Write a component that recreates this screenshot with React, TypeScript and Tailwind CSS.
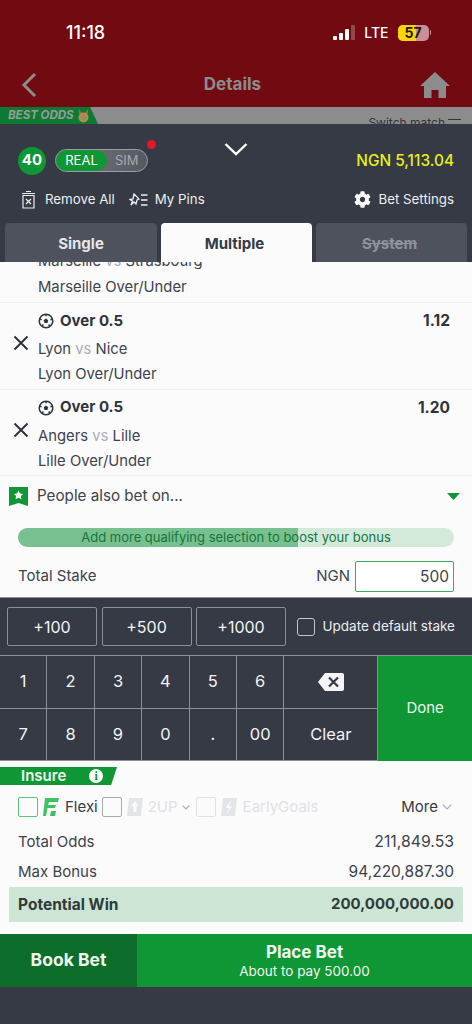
import { FaCog } from 'react-icons/fa';

const selections = [
    { odds: '1.12', home: 'Lyon', away: 'Nice', market: 'Lyon Over/Under' },
    { odds: '1.20', home: 'Angers', away: 'Lille', market: 'Lille Over/Under' },
];

function Ball() {
    return (
        <svg width="16" height="16" viewBox="0 0 16 16" fill="none" className="shrink-0">
            <circle cx="8" cy="8" r="6.8" stroke="#2f333c" strokeWidth="1.5" />
            <path d="M8 5.6l2.3 1.7-.9 2.7H6.6l-.9-2.7z" fill="#2f333c" />
            <path d="M8 1.5v1.8M2 6.3l1.6.5M14 6.3l-1.6.5M4.2 13l1.1-1.5M11.8 13l-1.1-1.5" stroke="#2f333c" strokeWidth="1.5" />
        </svg>
    );
}

function Cross() {
    return (
        <svg width="18" height="18" viewBox="0 0 18 18" fill="none" className="shrink-0">
            <path d="M2.5 2.5l13 13M15.5 2.5l-13 13" stroke="#2b2f38" strokeWidth="1.9" />
        </svg>
    );
}

function Selection({ odds, home, away, market }: { odds: string; home: string; away: string; market: string }) {
    return (
        <div className="flex h-[86.5px] shrink-0 border-b border-[#eef0f2] pl-[12px] pr-[22px]">
            <div className="flex w-[26px] items-center pb-[5px]">
                <Cross />
            </div>
            <div className="min-w-0 flex-1 pt-[8px] text-[14.8px] text-[#3d424c]">
                <div className="flex h-[20px] items-center justify-between">
                    <div className="flex items-center gap-[6px] text-[#2f333c]">
                        <Ball />
                        <span className="text-[15px] font-bold">Over 0.5</span>
                    </div>
                    <span className="text-[15.5px] font-bold text-[#2f333c]">{odds}</span>
                </div>
                <div className="mt-[8px] h-[20px] leading-[20px]">
                    {home} <span className="text-[#a9adb5]">vs</span> {away}
                </div>
                <div className="mt-[5px] h-[20px] leading-[20px]">{market}</div>
            </div>
        </div>
    );
}

function Key({ label, className = '' }: { label: React.ReactNode; className?: string }) {
    return (
        <div className={`flex items-center justify-center border-b border-r border-[#8b8f98] text-[16.5px] text-[#f2f3f5] ${className}`}>
            {label}
        </div>
    );
}

export default function App() {
    return (
        <div className="flex h-[1024px] w-[472px] flex-col overflow-hidden bg-[#353a45] font-['Inter',sans-serif]">
            {/* status bar and dimmed page header */}
            <div className="h-[107px] shrink-0 bg-[#720b11]">
                <div className="flex h-[64px] items-center pl-[66px] pr-[41px] pt-[1px]">
                    <span className="text-[18px] font-medium text-white">11:18</span>
                    <div className="ml-auto flex items-center">
                        <div className="flex items-end gap-[2px]">
                            <span className="h-[4px] w-[4px] rounded-[1px] bg-white" />
                            <span className="h-[7px] w-[4px] rounded-[1px] bg-white" />
                            <span className="h-[11px] w-[4px] rounded-[1px] bg-white" />
                            <span className="h-[15px] w-[4px] rounded-[1px] bg-white/25" />
                        </div>
                        <span className="ml-[9px] text-[14px] font-medium text-white">LTE</span>
                        <div className="relative ml-[9px] flex h-[16px] w-[31px] items-center justify-center overflow-hidden rounded-[5px] bg-[#c98f94]">
                            <div className="absolute inset-y-0 left-0 w-[18px] bg-[#ffd60a]" />
                            <span className="relative text-[14px] font-bold text-[#1b1b1b]">57</span>
                        </div>
                        <span className="ml-[1px] h-[5px] w-[1.5px] rounded-r-full bg-[#c98f94]" />
                    </div>
                </div>
                <div className="flex h-[41px] items-center pl-[21px] pr-[22px]">
                    <svg width="16" height="26" viewBox="0 0 16 26" fill="none">
                        <path d="M14 2L3 13l11 11" stroke="#8c8c8c" strokeWidth="3" />
                    </svg>
                    <span className="flex-1 pl-[8px] text-center text-[17px] font-bold text-[#8c8c8c]">Details</span>
                    <svg width="30" height="26" viewBox="0 0 30 26">
                        <path d="M15 0L0 14h4v12h7.5v-8h7v8H26V14h4z" fill="#8c8c8c" />
                    </svg>
                </div>
            </div>

            {/* strip of the page below the sheet */}
            <div className="flex h-[17px] shrink-0 justify-between overflow-hidden bg-[#8c8c8c]">
                <div className="flex h-[17px] w-[98px] items-center bg-[#0d7a33] pl-[8px] [clip-path:polygon(0_0,92%_0,100%_100%,0_100%)]">
                    <span className="text-[11.5px] font-bold italic text-[#9a9a9a]">BEST ODDS</span>
                    <svg width="13" height="14" viewBox="0 0 13 14" className="ml-[3px]">
                        <path d="M2 0l3 4h3l3-4v5H2z" fill="#a86a2c" />
                        <circle cx="6.5" cy="8.500" r="5" fill="#b98a4a" />
                        <circle cx="6.5" cy="8.500" r="2.500" fill="#8f8f6a" />
                    </svg>
                </div>
                <div className="mr-[11px] mt-[9px] flex gap-[3px] text-[12px] leading-[14px] text-[#333]">
                    <span>Switch match</span>
                    <span className="mt-[3px] h-[8px] w-[13px] border-t border-[#333]" />
                </div>
            </div>

            {/* sheet header */}
            <div className="relative shrink-0 px-[18px]">
                <div className="flex h-[66px] items-center pt-[7px]">
                    <span className="flex h-[28px] w-[28px] items-center justify-center rounded-full bg-[#0f9635] text-[15px] font-bold text-white">40</span>
                    <div className="relative ml-[9px] flex h-[23px] w-[93px] items-center rounded-full border border-[#9a9ea6] bg-gradient-to-r from-[#7a7d84] to-[#55585f]">
                        <div className="flex h-full w-[51px] items-center justify-center rounded-full bg-[#0f9635] text-[13px] text-white">REAL</div>
                        <span className="ml-[8px] text-[13px] text-[#a5a8ae]">SIM</span>
                        <span className="absolute -right-[9px] -top-[10px] h-[9px] w-[9px] rounded-full bg-[#e8142b]" />
                    </div>
                    <svg width="24" height="14" viewBox="0 0 24 14" fill="none" className="absolute left-[224px] top-[18px]">
                        <path d="M1.5 2L12 12 22.5 2" stroke="#fff" strokeWidth="2.4" />
                    </svg>
                    <span className="ml-auto text-[15.4px] font-medium text-[#e9ee1f]">NGN 5,113.04</span>
                </div>
                <div className="flex h-[19px] items-center text-[13.3px] text-[#eceef0]">
                    <svg width="15" height="19" viewBox="0 0 15 19" fill="none" className="ml-[3px]">
                        <path d="M5 1.5h5M1 3.5h13M2 5.500h11V18H2z" stroke="#eceef0" strokeWidth="1.2" />
                        <path d="M5 9l5 5M10 9l-5 5" stroke="#eceef0" strokeWidth="1.2" />
                    </svg>
                    <span className="ml-[9px]">Remove All</span>
                    <svg width="19" height="14" viewBox="0 0 19 14" fill="none" className="ml-[14px]">
                        <path d="M5 1l5 5-2 1-1 4-2-2-3 3 1.5-4L1 6.500l3-.5z" stroke="#eceef0" strokeWidth="1.3" />
                        <path d="M12 2h6.500M12 7h6.500M12 12h6.500" stroke="#eceef0" strokeWidth="1.3" />
                    </svg>
                    <span className="ml-[7px]">My Pins</span>
                    <FaCog className="ml-auto text-[17px] text-white" />
                    <span className="ml-[8px]">Bet Settings</span>
                </div>
            </div>

            <div className="mt-[14px] flex h-[39px] shrink-0 gap-[4px] px-[5px] text-[15px] font-bold">
                <div className="flex w-[152px] items-center justify-center rounded-t-[4px] bg-[#4d525c] pt-[3px] text-[#e6e7ea]">Single</div>
                <div className="flex w-[151px] items-center justify-center rounded-t-[4px] bg-[#fbfbfc] pr-[4px] pt-[3px] text-[#353a45]">Multiple</div>
                <div className="flex w-[151px] items-center justify-center rounded-t-[4px] bg-[#4d525c] pr-[4px] pt-[3px] text-[#8f939b] line-through">System</div>
            </div>

            {/* bet slip */}
            <div className="h-[335px] shrink-0 bg-[#fbfbfc]">
                <div className="flex h-[214px] flex-col justify-end overflow-hidden">
                    <div className="shrink-0 border-b border-[#eef0f2] pb-[5px] pl-[38px] text-[14.8px] text-[#3d424c]">
                        <div className="h-[20px] leading-[20px]">
                            Marseille <span className="text-[#a9adb5]">vs</span> Strasbourg
                        </div>
                        <div className="mt-[6px] h-[20px] leading-[20px]">Marseille Over/Under</div>
                    </div>
                    {selections.map((s) => (
                        <Selection key={s.market} {...s} />
                    ))}
                </div>
                <div className="flex h-[40px] items-center pl-[9px] pr-[12px]">
                    <svg width="19" height="19" viewBox="0 0 19 19" className="shrink-0">
                        <path d="M0 0h19v19l-9.5-3L0 19z" fill="#0f9635" />
                        <path d="M9.5 3.5l1.5 3 3.2.4-2.3 2.200.6 3.200-3-1.500-3 1.500.6-3.200-2.300-2.200 3.200-.4z" fill="#fff" />
                    </svg>
                    <span className="ml-[9px] text-[15.2px] text-[#3d424c]">People also bet on...</span>
                    <svg width="13" height="7" viewBox="0 0 13 7" className="ml-auto">
                        <path d="M0 0h13L6.5 7z" fill="#0f9635" />
                    </svg>
                </div>
                <div className="relative mx-[18px] mt-[12px] flex h-[19px] items-center justify-center overflow-hidden rounded-full bg-[#d3e9da]">
                    <div className="absolute inset-y-0 left-0 w-[280px] bg-[#78c08f]" />
                    <span className="relative text-[13px] text-[#15763a]">Add more qualifying selection to boost your bonus</span>
                </div>
                <div className="mt-[14px] flex items-center px-[18px] text-[15px] text-[#3d424c]">
                    <span>Total Stake</span>
                    <span className="ml-auto">NGN</span>
                    <div className="ml-[5px] flex h-[31px] w-[99px] items-center justify-end rounded-[2px] border border-[#3fa860] bg-white pr-[4px] text-[15.5px]">500</div>
                </div>
            </div>

            {/* quick stake */}
            <div className="flex h-[58px] shrink-0 items-center border-t border-[#8b8f98] pl-[7px]">
                {['+100', '+500', '+1000'].map((v) => (
                    <div key={v} className="mr-[4.5px] flex h-[39px] w-[90px] items-center justify-center rounded-[2px] border border-[#8b8f98] text-[16px] text-[#f2f3f5]">
                        {v}
                    </div>
                ))}
                <div className="ml-[6px] h-[18px] w-[18px] rounded-[3px] border border-[#c4c6cb]" />
                <span className="ml-[8px] text-[13.5px] text-[#eceef0]">Update default stake</span>
            </div>

            {/* keypad */}
            <div className="grid h-[106px] shrink-0 grid-cols-[repeat(6,47.4px)_94px_93.6px] grid-rows-2 border-t border-[#8b8f98]">
                {['1', '2', '3', '4', '5', '6'].map((k) => (
                    <Key key={k} label={k} />
                ))}
                <Key
                    label={
                        <svg width="26" height="18" viewBox="0 0 26 18">
                            <path d="M7 0h17a2 2 0 012 2v14a2 2 0 01-2 2H7L0 9z" fill="#f4f5f6" />
                            <path d="M11 4.5l9 9M20 4.5l-9 9" stroke="#353a45" strokeWidth="2.2" />
                        </svg>
                    }
                />
                <div className="row-span-2 flex items-center justify-center bg-[#0f9635] text-[15px] text-[#eef7f0]">Done</div>
                {['7', '8', '9', '0', '.', '00'].map((k) => (
                    <Key key={k} label={k} />
                ))}
                <Key label="Clear" className="text-[15px]" />
            </div>

            {/* insure and totals */}
            <div className="h-[173px] shrink-0 bg-[#fbfbfc]">
                <div className="mt-[6px] flex h-[18px] w-[117px] items-center bg-[#0f9635] pl-[21px] [clip-path:polygon(0_0,100%_0,95%_100%,0_100%)]">
                    <span className="text-[15px] font-semibold text-[#eef7f0]">Insure</span>
                    <span className="ml-[23px] flex h-[14px] w-[14px] items-center justify-center rounded-full bg-white font-['Liberation_Serif',serif] text-[12px] font-bold text-[#0f9635]">i</span>
                </div>
                <div className="mt-[12px] flex h-[20px] items-center pl-[18px] pr-[20px] text-[15px]">
                    <span className="h-[20px] w-[20px] rounded-[2px] border border-[#5cc47e]" />
                    <svg width="16" height="18" viewBox="0 0 16 18" className="ml-[5px]">
                        <path d="M2 0h14l-1 4H6L5 7h8l-1 3H4.5L3 18H0z" fill="#3fc065" />
                        <path d="M8 13h5l-1 5H7z" fill="#3fc065" />
                    </svg>
                    <span className="ml-[6px] text-[#353a45]">Flexi</span>
                    <span className="ml-[4px] h-[20px] w-[20px] rounded-[2px] border border-[#a5a9b2]" />
                    <svg width="16" height="18" viewBox="0 0 16 18" className="ml-[5px]">
                        <path d="M2 0h14l-2 18H0z" fill="#e3e5ea" />
                        <path d="M8 3l4 5H9.5v6h-3V8H4z" fill="#fbfbfc" />
                    </svg>
                    <span className="ml-[5px] text-[#dfe1e6]">2UP</span>
                    <svg width="8" height="5" viewBox="0 0 8 5" fill="none" className="ml-[4px]">
                        <path d="M.7.7L4 4 7.3.7" stroke="#a5a9b2" strokeWidth="1.1" />
                    </svg>
                    <span className="ml-[6px] h-[20px] w-[20px] rounded-[2px] border border-[#dfe1e6]" />
                    <svg width="16" height="18" viewBox="0 0 16 18" className="ml-[5px]">
                        <path d="M2 0h14l-2 18H0z" fill="#e3e5ea" />
                        <path d="M10 2L5 10h3l-2 6 5-8H8z" fill="#fbfbfc" />
                    </svg>
                    <span className="ml-[6px] text-[#dfe1e6]">EarlyGoals</span>
                    <span className="ml-auto text-[15px] text-[#353a45]">More</span>
                    <svg width="10" height="6" viewBox="0 0 10 6" fill="none" className="ml-[4px]">
                        <path d="M.7.7L5 5 9.3.7" stroke="#a5a9b2" strokeWidth="1.1" />
                    </svg>
                </div>
                <div className="mt-[10px] flex h-[30px] items-center justify-between px-[18px] text-[15px] text-[#3d424c]">
                    <span>Total Odds</span>
                    <span className="text-[15.8px]">211,849.53</span>
                </div>
                <div className="flex h-[30px] items-center justify-between px-[18px] text-[15px] text-[#3d424c]">
                    <span>Max Bonus</span>
                    <span className="text-[15.5px]">94,220,887.30</span>
                </div>
                <div className="mx-[9px] flex h-[35px] items-center justify-between bg-[#cce5d4] px-[9px] text-[15.5px] font-bold text-[#2f3b38]">
                    <span>Potential Win</span>
                    <span className="text-[15px]">200,000,000.00</span>
                </div>
            </div>

            {/* actions */}
            <div className="flex h-[53px] shrink-0">
                <div className="flex w-[137px] items-center justify-center bg-[#0c6e2a] text-[17.5px] font-bold text-[#eef7f0]">Book Bet</div>
                <div className="flex flex-1 flex-col items-center justify-center bg-[#0f9635] text-[#eef7f0]">
                    <span className="text-[17px] leading-[20px] font-bold">Place Bet</span>
                    <span className="text-[13.5px] leading-[18px]">About to pay 500.00</span>
                </div>
            </div>
        </div>
    );
}
